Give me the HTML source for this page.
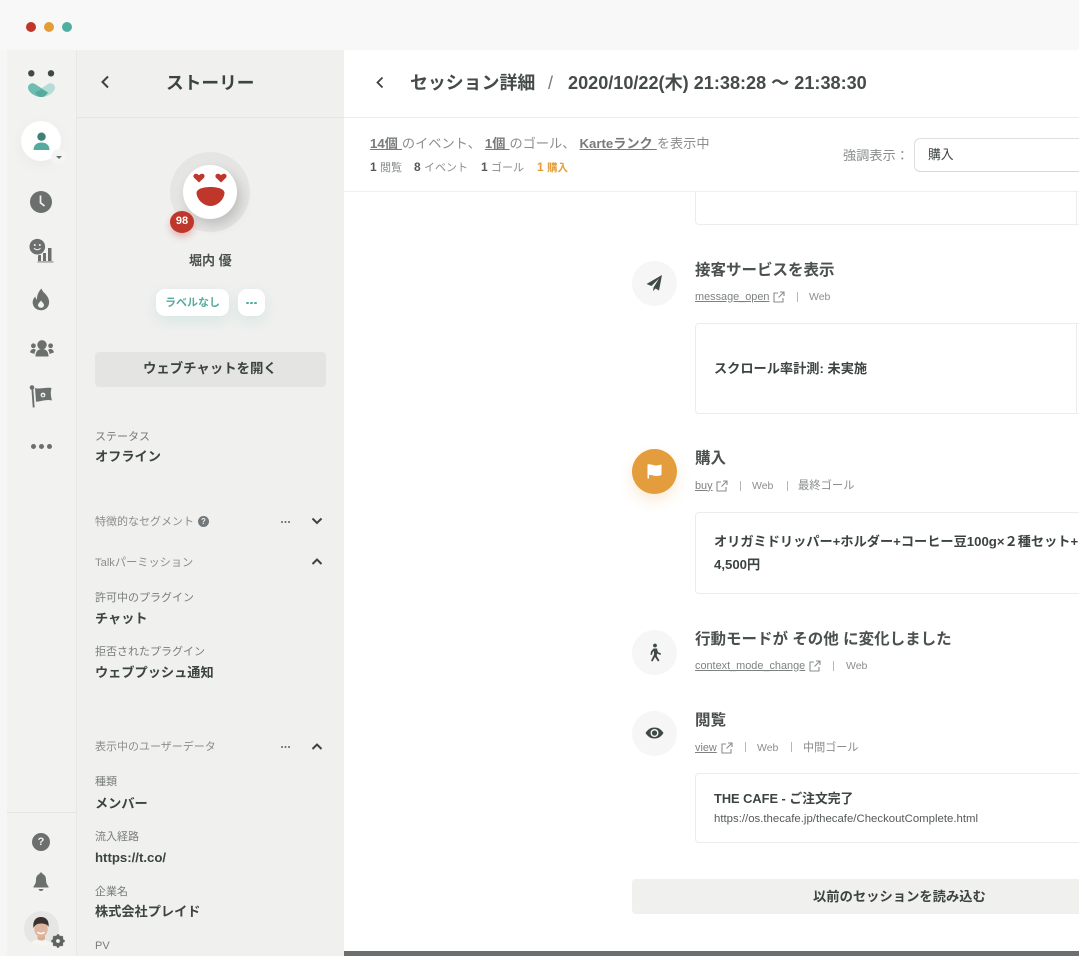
<!DOCTYPE html>
<html lang="ja">
<head>
<meta charset="utf-8">
<title>セッション詳細</title>
<style>
html,body{margin:0;padding:0;width:1079px;height:956px;overflow:hidden;background:#f6f6f6}
body{font-family:"Liberation Sans","Noto Sans CJK JP",sans-serif;color:#3c4442}
#w{position:relative;width:1079px;height:956px;overflow:hidden;filter:blur(.35px)}
.a{position:absolute}
.t{position:absolute;white-space:nowrap;line-height:1}
.b{font-weight:700}
.lab{font-size:11px;color:#777c7a}
.val{font-size:13.200px;font-weight:700;color:#3c4442}
.sec{font-size:11px;color:#8a8e8c}
.title{font-size:15.500px;font-weight:700;color:#4a504e}
.sub{font-size:11.300px;color:#8a8e8c}
.sub u{color:#7d8280;font-size:10.900px}
.web{font-size:10.500px}
.card{position:absolute;left:695px;width:400px;background:#fff;border:1px solid #ececec;border-radius:4px;box-sizing:border-box}
.circ{position:absolute;left:632px;width:45px;height:45px;border-radius:50%;background:#f6f6f6}
.circ svg{position:absolute;left:0;top:0}
.sep{position:absolute;width:1px;height:10px;background:#b5b8b7}
.ic{position:absolute;overflow:visible}
</style>
</head>
<body>
<div id="w">
<!-- title bar -->
<div class="a" style="left:0;top:0;width:1079px;height:50px;background:#f8f8f8"></div>
<div class="a" style="left:26px;top:22px;width:10px;height:10px;border-radius:50%;background:#bf372b"></div>
<div class="a" style="left:44px;top:22px;width:10px;height:10px;border-radius:50%;background:#e49c38"></div>
<div class="a" style="left:62px;top:22px;width:10px;height:10px;border-radius:50%;background:#4fae9f"></div>

<!-- nav column -->
<div class="a" style="left:7px;top:50px;width:70px;height:906px;background:#f2f2f1;border-right:1px solid #e8e8e7;box-sizing:border-box"></div>
<!-- side panel -->
<div class="a" style="left:77px;top:50px;width:267px;height:906px;background:#f0f0ef"></div>
<div class="a" style="left:77px;top:117px;width:267px;height:1px;background:#e5e5e4"></div>
<div class="a" style="left:7px;top:812px;width:69px;height:1px;background:#e5e5e4"></div>

<!-- logo -->
<svg class="ic" style="left:20px;top:64px" width="40" height="40" viewBox="0 0 40 40">
<circle cx="11.300" cy="9.300" r="3.200" fill="#3f4a47"/><circle cx="31" cy="9.300" r="3.200" fill="#3f4a47"/>
<path d="M35 23.500C34.700 20 31 18 28 20L15 28.500C17 31.500 19.500 33 22 33C28 33 35 28 35 23.500Z" fill="#b5dcd6"/>
<path d="M8 23.500C8.300 20 12 18 15 20L28 28.500C26 31.500 23.500 33 21 33C15 33 8 28 8 23.500Z" fill="#6dbdb0"/>
<path d="M21.500 25.300L28 28.500C26 31.500 24 33 21.500 33C19 33 17 31.500 15 28.500Z" fill="#54aa9c"/>
</svg>

<!-- user btn -->
<div class="a" style="left:21px;top:121px;width:40px;height:40px;border-radius:50%;background:#fff;box-shadow:0 4px 16px rgba(0,0,0,.04)"></div>
<svg class="ic" style="left:33px;top:132px" width="18" height="20" viewBox="0 0 18 20">
<circle cx="8.500" cy="4.700" r="4.200" fill="#3e8175"/>
<path d="M.5 18C.5 13 4 10.500 8.500 10.500S16.500 13 16.500 18Z" fill="#57ab9e"/>
</svg>
<div class="a" style="left:51px;top:149px;width:16px;height:16px;border-radius:50%;background:#f4f4f3"></div>
<div class="a" style="left:56px;top:156px;width:0;height:0;border-left:3px solid transparent;border-right:3px solid transparent;border-top:3px solid #6b706e"></div>

<!-- clock -->
<svg class="ic" style="left:29px;top:189.500px" width="24" height="24" viewBox="0 0 24 24">
<circle cx="12" cy="12" r="11" fill="#6b706e"/>
<path d="M11.500 5.500V12.800L15.500 16" fill="none" stroke="#f2f2f1" stroke-width="1.700"/>
</svg>
<!-- smile bars -->
<svg class="ic" style="left:29px;top:238px" width="26" height="26" viewBox="0 0 26 26">
<rect x="9" y="17" width="3" height="6" fill="#6b706e"/><rect x="14" y="15" width="3" height="8" fill="#6b706e"/><rect x="19" y="10" width="3.500" height="13" fill="#6b706e"/>
<rect x="8.500" y="23.300" width="16" height="1.200" fill="#8d918f"/>
<circle cx="8.300" cy="8.700" r="8.600" fill="#f2f2f1"/>
<circle cx="8.300" cy="8.700" r="7.800" fill="#6b706e"/>
<circle cx="5.800" cy="7" r="1" fill="#f2f2f1"/><circle cx="10.800" cy="7" r="1" fill="#f2f2f1"/>
<path d="M5 10.200C6.500 12.200 10 12.200 11.500 10.200" stroke="#f2f2f1" stroke-width="1" fill="none"/>
</svg>
<!-- flame -->
<svg class="ic" style="left:32px;top:288px" width="18" height="23" viewBox="0 0 18 23">
<path d="M9.500 .5C10.500 4 13 5 15 8C17.500 11.500 17.500 15 16.500 17.500C15 20.800 12 22.300 9 22.300C5 22.300 1.500 19.800 .8 15.800C.3 12.800 1.500 10 3.500 8.500C3.500 10 4 11 5 11.500C4.800 7.500 6.500 3.500 9.500 .5Z" fill="#6b706e"/>
<path d="M9 12.500C10 14 12 15.500 12 17C12 18.700 10.700 19.800 9 19.800S6 18.700 6 17C6 15.500 8 14 9 12.500Z" fill="#f2f2f1"/>
</svg>
<!-- users -->
<svg class="ic" style="left:29.500px;top:340px" width="24" height="17" viewBox="0 0 24 17">
<circle cx="12" cy="4.800" r="4.700" fill="#6b706e"/>
<path d="M5.500 16.500C5.500 11.500 8 9 12 9S18.500 11.500 18.500 16.500Z" fill="#6b706e"/>
<circle cx="3.400" cy="5.800" r="2.400" fill="#6b706e"/><circle cx="20.600" cy="5.800" r="2.400" fill="#6b706e"/>
<path d="M.2 12.500C.2 10 2 8.800 4.500 9L6 10C5 11 4.500 12.500 4.500 14Z" fill="#6b706e"/>
<path d="M23.800 12.500C23.800 10 22 8.800 19.500 9L18 10C19 11 19.500 12.500 19.500 14Z" fill="#6b706e"/>
</svg>
<!-- flag -->
<svg class="ic" style="left:29px;top:384px" width="24" height="26" viewBox="0 0 24 26">
<circle cx="3" cy="3.500" r="2.300" fill="#6b706e"/>
<rect x="2.300" y="3.500" width="1.900" height="20" fill="#6b706e" transform="rotate(-4 3 3)"/>
<path d="M6 4C10 5.500 17 3 22.500 4C21.500 8 21.500 11 23 16.500C18 15 12 17.500 7 17.800Z" fill="#6b706e"/>
<circle cx="14" cy="11" r="2.400" fill="#f2f2f1"/>
<circle cx="14" cy="11.300" r="1.100" fill="#6b706e"/>
</svg>
<!-- more dots -->
<div class="a" style="left:31px;top:443.500px;width:5px;height:5px;border-radius:50%;background:#6b706e"></div>
<div class="a" style="left:39px;top:443.500px;width:5px;height:5px;border-radius:50%;background:#6b706e"></div>
<div class="a" style="left:47px;top:443.500px;width:5px;height:5px;border-radius:50%;background:#6b706e"></div>

<!-- help -->
<div class="a" style="left:32px;top:833px;width:18px;height:18px;border-radius:50%;background:#6b706e;color:#f1f1f0;font-size:11px;font-weight:700;line-height:18px;text-align:center">?</div>
<!-- bell -->
<svg class="ic" style="left:33px;top:872px" width="16" height="20" viewBox="0 0 16 20">
<path d="M8 .5C9 .5 9.500 1 9.500 2C12 2.800 13 5 13 8C13 11 14 12.500 15.500 14.500V15.500H.5V14.500C2 12.500 3 11 3 8C3 5 4 2.800 6.500 2C6.500 1 7 .5 8 .5Z" fill="#6b706e"/>
<path d="M5.500 17H10.500C10 18.500 9 19 8 19S6 18.500 5.500 17Z" fill="#6b706e"/>
</svg>
<!-- avatar -->
<svg class="ic" style="left:23.500px;top:911px" width="36" height="36" viewBox="0 0 36 36">
<defs><clipPath id="av"><circle cx="17.500" cy="17.500" r="17.500"/></clipPath></defs>
<circle cx="17.500" cy="17.500" r="17.500" fill="#e6e6e5"/>
<g clip-path="url(#av)">
<path d="M5 36C7 30 11 28.500 16 28.500C22 28.500 27 30 29 36Z" fill="#f7f4f1"/>
<path d="M13.500 22H21V28C20 30 15 30 13.500 28Z" fill="#d9ad94"/>
<ellipse cx="17" cy="18" rx="6.700" ry="8" fill="#dfb69f"/>
<path d="M9.500 17C8.500 9.500 12 6 17 6C22 6 25.500 9.500 24.500 16C23.500 13.500 21 12.500 17 12.500C13 12.500 11 14 9.500 17Z" fill="#3a322e"/>
<path d="M13.500 21C15 23 19 23 20.500 21" stroke="#fff" stroke-width="1.400" fill="none"/>
</g>
</svg>
<svg class="ic" style="left:51px;top:934px" width="14" height="14" viewBox="0 0 14 14">
<circle cx="7" cy="7" r="3.800" fill="none" stroke="#5f6462" stroke-width="3.800"/>
<path d="M7 .3V3M7 11V13.700M.3 7H3M11 7H13.700M2.300 2.300L4 4M10 10L11.700 11.700M11.700 2.300L10 4M4 10L2.300 11.700" stroke="#5f6462" stroke-width="2.200"/>
</svg>

<!-- side header -->
<svg class="ic" style="left:99.500px;top:75px" width="10" height="14" viewBox="0 0 10 14"><path d="M8 1.500L2.500 7L8 12.500" fill="none" stroke="#3c4442" stroke-width="2"/></svg>
<div class="t b" style="left:166px;top:74.500px;font-size:17.700px;color:#3c4442">ストーリー</div>

<!-- profile -->
<div class="a" style="left:170px;top:152px;width:80px;height:80px;border-radius:50%;background:#e5e5e4"></div>
<div class="a" style="left:183px;top:165px;width:54px;height:54px;border-radius:50%;background:#fff;box-shadow:4px 6px 12px rgba(0,0,0,.17)"></div>
<svg class="ic" style="left:190px;top:172px" width="40" height="38" viewBox="0 0 40 38">
<path d="M9 10.500L4.300 6C2.600 4.200 3.500 1.900 5.800 1.700C7.100 1.600 8.300 2.300 9 3.300C9.700 2.300 10.900 1.600 12.200 1.700C14.500 1.900 15.400 4.200 13.700 6Z" fill="#bf372b"/>
<path d="M31 10.500L26.300 6C24.600 4.200 25.500 1.900 27.800 1.700C29.100 1.600 30.300 2.300 31 3.300C31.700 2.300 32.900 1.600 34.200 1.700C36.500 1.900 37.400 4.200 35.700 6Z" fill="#bf372b"/>
<path d="M6.500 21C6.500 17 13 15 20.500 15C28 15 34.500 17 34.500 21C34 28 27 34 20.500 34C14 34 7 28 6.500 21Z" fill="#bf372b"/>
</svg>
<div class="a" style="left:170px;top:211px;width:24px;height:22px;border-radius:50%;background:#bf372b;box-shadow:0 4px 7px rgba(191,55,43,.3);color:#fff;font-size:11px;font-weight:700;line-height:21px;text-align:center">98</div>
<div class="t b" style="left:189px;top:254px;font-size:13px;color:#4a504e">堀内 優</div>

<div class="a" style="left:156px;top:289px;width:73px;height:27px;border-radius:9px;background:#fff;box-shadow:0 5px 14px rgba(90,180,165,.16)"></div>
<div class="t b" style="left:165px;top:298px;font-size:11px;color:#57ab9e">ラベルなし</div>
<div class="a" style="left:238px;top:289px;width:27px;height:27px;border-radius:9px;background:#fff;box-shadow:0 5px 14px rgba(90,180,165,.16)"></div>
<div class="a" style="left:246px;top:301.500px;width:2.500px;height:2.500px;border-radius:50%;background:#57ab9e;box-shadow:4px 0 #57ab9e,8px 0 #57ab9e"></div>

<div class="a" style="left:95px;top:352px;width:231px;height:35px;border-radius:4px;background:#e4e4e3"></div>
<div class="t b" style="left:143px;top:362px;font-size:13.400px;color:#3c4442">ウェブチャットを開く</div>

<div class="t lab" style="left:95px;top:431.500px">ステータス</div>
<div class="t val" style="left:95px;top:450px">オフライン</div>

<div class="t sec" style="left:95px;top:517px">特徴的なセグメント</div>
<div class="a" style="left:198px;top:516px;width:11px;height:11px;border-radius:50%;background:#73787a;color:#f0f0ef;font-size:8px;font-weight:700;line-height:11px;text-align:center">?</div>
<div class="a" style="left:281px;top:521px;width:2px;height:2px;border-radius:50%;background:#5f6462;box-shadow:3.500px 0 #5f6462,7px 0 #5f6462"></div>
<svg class="ic" style="left:311px;top:517px" width="12" height="9" viewBox="0 0 12 9"><path d="M1.500 1.500L6 6L10.500 1.500" fill="none" stroke="#3c4442" stroke-width="2"/></svg>

<div class="t sec" style="left:95px;top:557.500px;font-size:11.200px">Talkパーミッション</div>
<svg class="ic" style="left:311px;top:557px" width="12" height="9" viewBox="0 0 12 9"><path d="M1.500 7L6 2.500L10.500 7" fill="none" stroke="#3c4442" stroke-width="2"/></svg>

<div class="t lab" style="left:95px;top:592.500px">許可中のプラグイン</div>
<div class="t val" style="left:95px;top:612px">チャット</div>
<div class="t lab" style="left:95px;top:647px">拒否されたプラグイン</div>
<div class="t val" style="left:95px;top:666px">ウェブプッシュ通知</div>

<div class="t sec" style="left:95px;top:741.500px">表示中のユーザーデータ</div>
<div class="a" style="left:281px;top:746px;width:2px;height:2px;border-radius:50%;background:#5f6462;box-shadow:3.500px 0 #5f6462,7px 0 #5f6462"></div>
<svg class="ic" style="left:311px;top:742px" width="12" height="9" viewBox="0 0 12 9"><path d="M1.500 7L6 2.500L10.500 7" fill="none" stroke="#3c4442" stroke-width="2"/></svg>

<div class="t lab" style="left:95px;top:777px">種類</div>
<div class="t val" style="left:95px;top:797px">メンバー</div>
<div class="t lab" style="left:95px;top:832px">流入経路</div>
<div class="t val" style="left:95px;top:851px">https://t.co/</div>
<div class="t lab" style="left:95px;top:886.500px">企業名</div>
<div class="t val" style="left:95px;top:905px">株式会社プレイド</div>
<div class="t lab" style="left:95px;top:941px">PV</div>

<!-- main -->
<div class="a" style="left:344px;top:50px;width:735px;height:901px;background:#fff"></div>
<div class="a" style="left:344px;top:951px;width:735px;height:5px;background:#6b706e"></div>
<div class="a" style="left:344px;top:117px;width:735px;height:1px;background:#ececec"></div>
<div class="a" style="left:344px;top:191px;width:735px;height:1px;background:#efefef"></div>

<svg class="ic" style="left:375px;top:76px" width="10" height="13" viewBox="0 0 10 13"><path d="M7.500 1.500L2.500 6.500L7.500 11.500" fill="none" stroke="#3c4442" stroke-width="1.800"/></svg>
<div class="t b" style="left:410px;top:75px;font-size:17.900px;color:#454b49">セッション詳細</div>
<div class="t" style="left:548px;top:74px;font-size:18px;color:#777c7a">/</div>
<div class="t b" style="left:568px;top:74px;font-size:18.100px;color:#454b49">2020/10/22(木) 21:38:28 〜 21:38:30</div>

<div class="t" style="left:370px;top:137px;font-size:13.200px;word-spacing:.4px;color:#8a8e8c"><u class="b" style="color:#777c7a">14個 </u>のイベント、 <u class="b" style="color:#777c7a">1個 </u>のゴール、 <u class="b" style="color:#777c7a">Karteランク </u>を表示中</div>
<div class="t" style="left:370px;top:161px;font-size:12px;color:#555a58"><b>1</b> <span style="font-size:11px;color:#8a8e8c">閲覧</span></div>
<div class="t" style="left:414px;top:161px;font-size:12px;color:#555a58"><b>8</b> <span style="font-size:11px;color:#8a8e8c">イベント</span></div>
<div class="t" style="left:481px;top:161px;font-size:12px;color:#555a58"><b>1</b> <span style="font-size:11px;color:#8a8e8c">ゴール</span></div>
<div class="t" style="left:537px;top:161px;font-size:12px;color:#e49c38"><b>1</b> <span style="font-size:10.500px;font-weight:700">購入</span></div>

<div class="t" style="left:843px;top:148.500px;font-size:13.200px;color:#8a8e8c">強調表示：</div>
<div class="a" style="left:913.500px;top:138px;width:190px;height:34px;box-sizing:border-box;border:1px solid #dedede;border-bottom:1.500px solid #d8d8d8;border-radius:6px;background:#fff"></div>
<div class="t" style="left:928px;top:149px;font-size:12.800px;color:#3c4442">購入</div>

<!-- timeline top card stub -->
<div class="a" style="left:695px;top:192px;width:400px;height:33px;box-sizing:border-box;border:1px solid #ececec;border-top:0;border-radius:0 0 4px 4px;background:#fff"></div>
<div class="a" style="left:1076px;top:192px;width:1px;height:32px;background:#ececec"></div>

<!-- event 1 -->
<div class="circ" style="top:260.500px">
<svg width="45" height="45" viewBox="0 0 45 45"><path d="M30 14L14.500 23L19.500 25L27 17.500L21.500 26.500L21 30L23.500 27.500L27 29.500Z" fill="#3f4a47"/></svg>
</div>
<div class="t title" style="left:695px;top:262.500px">接客サービスを表示</div>
<div class="t sub" style="left:695px;top:291.500px"><u>message_open</u></div>
<svg class="ic ext" style="left:773px;top:291px" width="12" height="12" viewBox="0 0 12 12"><path d="M5 2H1V11H10V7M7 1H11V5M11 1L5.500 6.500" fill="none" stroke="#8a8e8c" stroke-width="1.100"/></svg>
<div class="sep" style="left:797px;top:292px"></div>
<div class="t sub web" style="left:809px;top:292px">Web</div>
<div class="card" style="top:323px;height:91px"></div>
<div class="a" style="left:1076px;top:324px;width:1px;height:89px;background:#ececec"></div>
<div class="t b" style="left:714px;top:362px;font-size:13.200px;color:#3c4442">スクロール率計測: 未実施</div>

<!-- event 2 -->
<div class="circ" style="top:449px;background:#e39d3c;box-shadow:0 7px 14px rgba(227,157,60,.2)">
<svg width="45" height="45" viewBox="0 0 45 45"><path d="M15.500 15.500C19 14.500 22 17 25 16.500C26.500 16.300 28 15.800 29.500 15.500V26C28 26.500 26.500 27 25 27C22 27.300 19.500 25.500 17 26V29.500H15.500Z" fill="#fff"/></svg>
</div>
<div class="t title" style="left:695px;top:451px">購入</div>
<div class="t sub" style="left:695px;top:480.500px"><u>buy</u></div>
<svg class="ic" style="left:716px;top:480px" width="12" height="12" viewBox="0 0 12 12"><path d="M5 2H1V11H10V7M7 1H11V5M11 1L5.500 6.500" fill="none" stroke="#8a8e8c" stroke-width="1.100"/></svg>
<div class="sep" style="left:740px;top:481px"></div>
<div class="t sub web" style="left:752px;top:481px">Web</div>
<div class="sep" style="left:787px;top:481px"></div>
<div class="t sub" style="left:798px;top:480.500px">最終ゴール</div>
<div class="card" style="top:512px;height:82px"></div>
<div class="t b" style="left:714px;top:535px;font-size:13.200px;color:#3c4442">オリガミドリッパー+ホルダー+コーヒー豆100g×２種セット+</div>
<div class="t b" style="left:714px;top:557.500px;font-size:13.200px;color:#3c4442">4,500円</div>

<!-- event 3 -->
<div class="circ" style="top:630px">
<svg width="45" height="45" viewBox="0 0 45 45"><circle cx="23" cy="15.500" r="1.900" fill="#3f4a47"/><path d="M21.500 18.500L25 18.500L26 22L29 23.500L28.500 25L25 23.500L24.800 26L27.500 30.500L26 31.500L23 27L20.500 31.500L19 30.800L22 24.500L22 21L20.500 22.500L20 25L18.500 24.800L19 21.500Z" fill="#3f4a47"/></svg>
</div>
<div class="t title" style="left:695px;top:631.500px">行動モードが その他 に変化しました</div>
<div class="t sub" style="left:695px;top:660.500px"><u>context_mode_change</u></div>
<svg class="ic" style="left:809px;top:660px" width="12" height="12" viewBox="0 0 12 12"><path d="M5 2H1V11H10V7M7 1H11V5M11 1L5.500 6.500" fill="none" stroke="#8a8e8c" stroke-width="1.100"/></svg>
<div class="sep" style="left:833px;top:661px"></div>
<div class="t sub web" style="left:846px;top:661px">Web</div>

<!-- event 4 -->
<div class="circ" style="top:711px">
<svg width="45" height="45" viewBox="0 0 45 45"><path d="M13.500 22C16 18 19 16.500 22.500 16.500S29 18 31.500 22C29 26 26 27.500 22.500 27.500S16 26 13.500 22Z" fill="#3f4a47"/><circle cx="22.500" cy="22" r="4" fill="#f6f6f6"/><circle cx="22.500" cy="22" r="2.600" fill="#3f4a47"/></svg>
</div>
<div class="t title" style="left:695px;top:713px">閲覧</div>
<div class="t sub" style="left:695px;top:742.500px"><u>view</u></div>
<svg class="ic" style="left:721px;top:742px" width="12" height="12" viewBox="0 0 12 12"><path d="M5 2H1V11H10V7M7 1H11V5M11 1L5.500 6.500" fill="none" stroke="#8a8e8c" stroke-width="1.100"/></svg>
<div class="sep" style="left:745px;top:742px"></div>
<div class="t sub web" style="left:757px;top:742.500px">Web</div>
<div class="sep" style="left:791px;top:742px"></div>
<div class="t sub" style="left:803px;top:742.500px;font-size:11.100px">中間ゴール</div>
<div class="card" style="top:773px;height:70px"></div>
<div class="t b" style="left:714px;top:792.500px;font-size:12.800px;color:#3c4442">THE CAFE - ご注文完了</div>
<div class="t" style="left:714px;top:813.500px;font-size:11.400px;color:#555a58">https://os.thecafe.jp/thecafe/CheckoutComplete.html</div>

<div class="a" style="left:632px;top:879px;width:500px;height:35px;background:#f0f0ef;border-radius:4px"></div>
<div class="t b" style="left:813px;top:890px;font-size:13.300px;color:#3c4442">以前のセッションを読み込む</div>
</div>
</body>
</html>
